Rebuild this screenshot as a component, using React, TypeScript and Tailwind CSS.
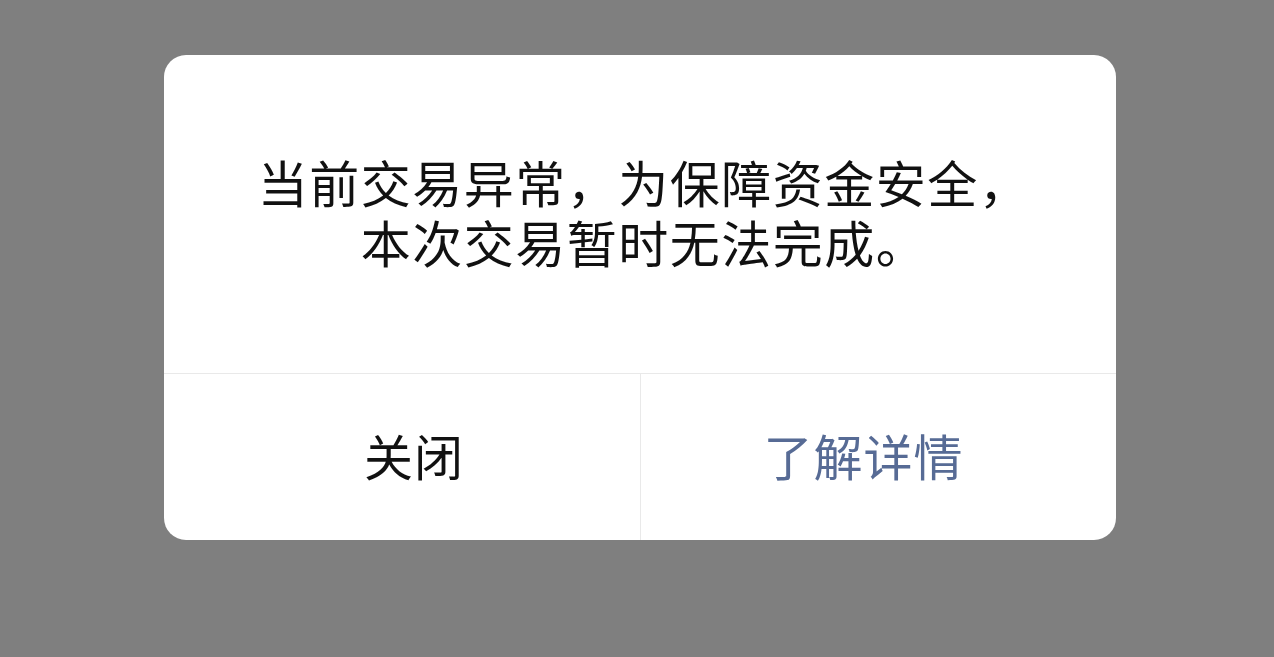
export default function App() {
  return (
    <div
      className="w-[1274px] h-[657px] bg-[#7f7f7f] flex items-start pl-[164px] pt-[55px]"
      style={{ fontFamily: '"Noto Sans CJK SC", "Noto Sans", sans-serif' }}
    >
      <div className="w-[952px] h-[485px] bg-white rounded-[22px] flex flex-col overflow-hidden">
        {/* Message */}
        <div className="h-[318px] flex flex-col items-center justify-center text-[50px] leading-[60px] tracking-[1.5px] text-[#111111] pb-[6px] pl-[8px]">
          <p>当前交易异常，为保障资金安全，</p>
          <p>本次交易暂时无法完成。</p>
        </div>

        {/* Actions */}
        <div className="flex-1 flex border-t border-[#e9e9e9]">
          <button className="w-[477px] flex items-center justify-center text-[49px] tracking-[1px] text-[#111111] border-r border-[#e9e9e9] pb-[4px] pl-[24px]">
            关闭
          </button>
          <button className="flex-1 flex items-center justify-center text-[49px] tracking-[1px] text-[#576b95] pb-[4px] pr-[30px]">
            了解详情
          </button>
        </div>
      </div>
    </div>
  )
}
